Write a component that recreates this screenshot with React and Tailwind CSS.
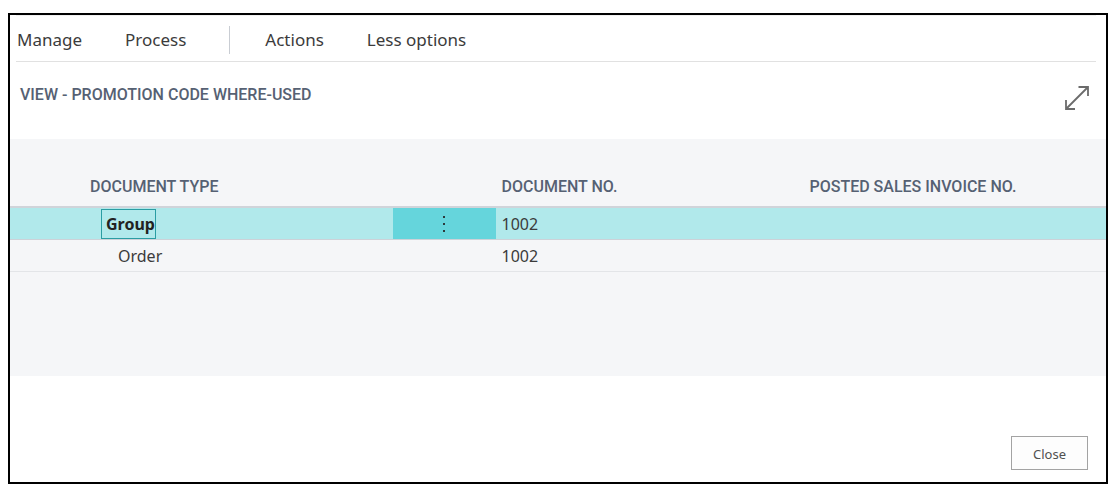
import React from "react";

const rows = [
  { type: "Group", documentNo: "1002", invoiceNo: "", selected: true },
  { type: "Order", documentNo: "1002", invoiceNo: "", selected: false },
];

function MenuButton({ children }) {
  return (
    <button type="button" className="text-[17px] leading-6 text-[#3b3b3b]">
      {children}
    </button>
  );
}

function ActionBar() {
  return (
    <nav className="ml-1.5 mr-2.5 flex h-[47px] items-center gap-[43px] border-t border-b border-t-[#f0f0f0] border-b-[#e1e1e1] pl-px pt-[3px]">
      <MenuButton>Manage</MenuButton>
      <MenuButton>Process</MenuButton>
      <span className="-mr-2 h-7 w-px bg-[#c9cdd3]" />
      <MenuButton>Actions</MenuButton>
      <MenuButton>Less options</MenuButton>
    </nav>
  );
}

function ExpandIcon() {
  return (
    <svg width="26" height="26" viewBox="0 0 26 26" fill="none" stroke="#6b6b6b" strokeWidth="1.8">
      <path d="M2 24L24 2M14.5 2H24V11M2 15V24H11" />
    </svg>
  );
}

function MoreIcon() {
  return (
    <svg width="4" height="18" viewBox="0 0 4 18" fill="#2c3a3c" className="mx-auto">
      <rect x="1" y="1" width="2" height="2" />
      <rect x="1" y="8" width="2" height="2" />
      <rect x="1" y="15" width="2" height="2" />
    </svg>
  );
}

function Row({ type, documentNo, invoiceNo, selected }) {
  return (
    <tr className={selected ? "h-8 bg-[#b1e9eb]" : "h-8"}>
      <td className={`border-b ${selected ? "border-[#cdd2d8] pl-[91px]" : "border-[#e3e5e8] pl-[108px]"}`}>
        {selected ? (
          <button type="button" className="block h-[30px] border border-[#2a9da3] pl-1 font-bold text-[#222]">
            {type}
          </button>
        ) : (
          type
        )}
      </td>
      <td className={`border-b ${selected ? "border-[#cdd2d8] bg-[#65d5dc]" : "border-[#e3e5e8]"}`}>
        {selected && (
          <button type="button" aria-label="Show more options" className="block w-full">
            <MoreIcon />
          </button>
        )}
      </td>
      <td className={`border-b pl-1.5 ${selected ? "border-[#cdd2d8]" : "border-[#e3e5e8]"}`}>{documentNo}</td>
      <td className={`border-b pl-1.5 ${selected ? "border-[#cdd2d8]" : "border-[#e3e5e8]"}`}>{invoiceNo}</td>
    </tr>
  );
}

function WhereUsedTable() {
  const head = "border-b-2 border-[#d0d4da] pt-7 text-left font-medium";
  return (
    <table className="w-full table-fixed border-separate border-spacing-0 text-base text-[#3b3b3b]">
      <colgroup>
        <col className="w-[34.9%]" />
        <col className="w-[9.4%]" />
        <col className="w-[28.1%]" />
        <col />
      </colgroup>
      <thead>
        <tr className="h-[69px] font-[Roboto,sans-serif] text-[#566173]">
          <th className={`${head} pl-20`}>DOCUMENT TYPE</th>
          <td className={head} />
          <th className={`${head} pl-1.5`}>DOCUMENT NO.</th>
          <th className={`${head} pl-1.5`}>POSTED SALES INVOICE NO.</th>
        </tr>
      </thead>
      <tbody>
        {rows.map((row) => (
          <Row key={row.type} {...row} />
        ))}
      </tbody>
    </table>
  );
}

export default function App() {
  return (
    <div className="min-h-screen bg-white pt-[13px] pr-2.5 pb-2.5 pl-2 font-['Noto_Sans',sans-serif]">
      <main className="border-2 border-black">
        <ActionBar />
        <header className="flex h-[77px] items-start justify-between pt-[21px] pr-4 pl-2.5">
          <h1 className="font-[Roboto,sans-serif] text-base font-medium text-[#566173]">
            VIEW - PROMOTION CODE WHERE-USED
          </h1>
          <button type="button" aria-label="Expand" className="mt-0.5">
            <ExpandIcon />
          </button>
        </header>
        <section className="min-h-[237px] bg-[#f5f6f8]">
          <WhereUsedTable />
        </section>
        <footer className="flex justify-end pt-15 pr-[18px] pb-3">
          <button type="button" className="h-[34px] w-[77px] border border-[#a3a3a3] bg-[#fdfdfd] pt-1 text-[13px] text-[#505050]">
            Close
          </button>
        </footer>
      </main>
    </div>
  );
}
